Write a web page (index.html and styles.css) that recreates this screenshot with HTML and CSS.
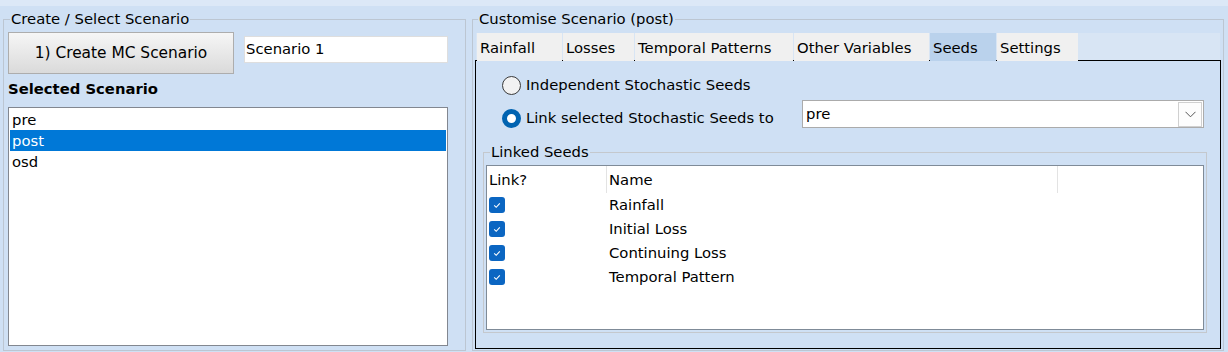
FILE: index.html
```html
<!DOCTYPE html>
<html>
<head>
<meta charset="utf-8">
<link rel="stylesheet" href="styles.css">
</head>
<body>
<div class="topbar"></div>
<div class="main">
  <fieldset class="group left">
    <legend>Create / Select Scenario</legend>
    <div class="create-row">
      <div class="btn">1) Create MC Scenario</div>
      <div class="textbox">Scenario 1</div>
    </div>
    <div class="section-title">Selected Scenario</div>
    <div class="listbox">
      <div class="item">pre</div>
      <div class="item selected">post</div>
      <div class="item">osd</div>
    </div>
  </fieldset>

  <fieldset class="group right">
    <legend>Customise Scenario (post)</legend>
    <div class="tabstrip">
      <div class="tab t-rain">Rainfall</div>
      <div class="tab t-loss">Losses</div>
      <div class="tab t-temp">Temporal Patterns</div>
      <div class="tab t-other">Other Variables</div>
      <div class="tab t-seeds active">Seeds</div>
      <div class="tab t-set">Settings</div>
    </div>
    <div class="tabpage">
      <div class="opt-row">
        <div class="radio"><span class="radio-dot"></span><span>Independent Stochastic Seeds</span></div>
      </div>
      <div class="opt-row second">
        <div class="radio linked-radio"><span class="radio-dot on"></span><span>Link selected Stochastic Seeds to</span></div>
        <div class="combo">
          <div class="combo-text">pre</div>
          <div class="dd-btn"><svg width="11" height="7" viewBox="0 0 11 7"><polyline points="0.5,0.8 5.5,5.8 10.5,0.8" fill="none" stroke="#555" stroke-width="1"/></svg></div>
        </div>
      </div>
      <fieldset class="linked">
        <legend>Linked Seeds</legend>
        <div class="grid">
          <div class="grid-head">
            <div class="cell col-link">Link?</div>
            <div class="cell col-name">Name</div>
          </div>
          <div class="grid-row"><div class="col-link"><span class="check"><svg width="16" height="16" viewBox="0 0 16 16"><polyline points="5.2,8.4 7.2,10.3 10.8,6.4" fill="none" stroke="#fff" stroke-width="1.1"/></svg></span></div><div class="col-name">Rainfall</div></div>
          <div class="grid-row"><div class="col-link"><span class="check"><svg width="16" height="16" viewBox="0 0 16 16"><polyline points="5.2,8.4 7.2,10.3 10.8,6.4" fill="none" stroke="#fff" stroke-width="1.1"/></svg></span></div><div class="col-name">Initial Loss</div></div>
          <div class="grid-row"><div class="col-link"><span class="check"><svg width="16" height="16" viewBox="0 0 16 16"><polyline points="5.2,8.4 7.2,10.3 10.8,6.4" fill="none" stroke="#fff" stroke-width="1.1"/></svg></span></div><div class="col-name">Continuing Loss</div></div>
          <div class="grid-row"><div class="col-link"><span class="check"><svg width="16" height="16" viewBox="0 0 16 16"><polyline points="5.2,8.4 7.2,10.3 10.8,6.4" fill="none" stroke="#fff" stroke-width="1.1"/></svg></span></div><div class="col-name">Temporal Pattern</div></div>
        </div>
      </fieldset>
    </div>
  </fieldset>
</div>
</body>
</html>
```

FILE: styles.css
```css
html, body {
  margin: 0;
  padding: 0;
}
body {
  width: 1228px;
  height: 352px;
  overflow: hidden;
  background: #cfe0f4;
  font-family: "DejaVu Sans", "Liberation Sans", sans-serif;
  font-size: 14.8px;
  line-height: 18px;
  color: #000;
}
.topbar {
  height: 6px;
  background: #dce8f7;
}
.main {
  display: flex;
  gap: 6px;
  padding: 4px 0 0 3px;
}
fieldset {
  margin: 0;
  min-width: 0;
  box-sizing: border-box;
}
legend {
  padding: 0 1px;
  line-height: 18px;
}
.group {
  border: 1px solid #bcc6d2;
  height: 341px;
}
.left {
  width: 463px;
  padding: 0 4px;
}
.left > legend {
  margin-left: 2px;
}
.right {
  width: 752px;
  padding: 0 2px 1px;
}
.right > legend {
  margin-left: 3px;
}

/* left panel */
.create-row {
  display: flex;
  align-items: flex-start;
  margin-top: 4px;
}
.btn {
  width: 226px;
  height: 42px;
  box-sizing: border-box;
  border: 1px solid #adadad;
  background: linear-gradient(#f6f6f6, #dadada);
  display: flex;
  align-items: center;
  justify-content: center;
  font-size: 15.4px;
}
.textbox {
  margin: 4px 0 0 10px;
  width: 204px;
  height: 27px;
  box-sizing: border-box;
  border: 1px solid #dedede;
  background: #fff;
  padding: 3px 1px 0;
}
.section-title {
  font-weight: bold;
  margin-top: 6px;
}
.listbox {
  margin-top: 9px;
  width: 440px;
  height: 239px;
  box-sizing: border-box;
  border: 1px solid #828790;
  background: #fff;
  padding: 1px;
}
.item {
  height: 21px;
  line-height: 21px;
  padding-left: 2px;
}
.item.selected {
  background: #0078d7;
  color: #fff;
}

/* tabs */
.tabstrip {
  display: flex;
  gap: 1px;
  height: 27px;
  margin: 5px 1px 0;
  padding-left: 1px;
  background: #d8e5f4;
}
.tab {
  position: relative;
  z-index: 1;
  height: 28px;
  box-sizing: border-box;
  padding: 6px 0 0 3px;
  background: #f0f0f0;
  white-space: nowrap;
  flex: none;
}
.tab.active {
  background: #bad2ec;
}
.t-rain { width: 85px; }
.t-loss { width: 71px; }
.t-temp { width: 158px; }
.t-other { width: 135px; }
.t-seeds { width: 66px; }
.t-set { width: 81px; }

.tabpage {
  height: 289px;
  box-sizing: border-box;
  border: 1px solid #000;
  padding: 14px 13px 0 7px;
}
.opt-row {
  display: flex;
  align-items: flex-start;
  padding-left: 19px;
}
.opt-row.second {
  margin-top: 5px;
}
.radio {
  display: flex;
  align-items: center;
  gap: 5px;
  height: 20px;
  white-space: nowrap;
}
.linked-radio {
  margin-top: 8px;
}
.radio-dot {
  width: 19px;
  height: 19px;
  box-sizing: border-box;
  border-radius: 50%;
  border: 1px solid #3a3a3a;
  background: #f2f2f2;
  flex: none;
}
.radio-dot.on {
  border: 5.5px solid #0063b1;
  background: #fff;
}
.combo {
  margin-left: auto;
  margin-right: 3px;
  width: 402px;
  height: 28px;
  box-sizing: border-box;
  border: 1px solid #ababab;
  background: #fff;
  display: flex;
}
.combo-text {
  flex: 1;
  padding: 4px 0 0 3px;
}
.dd-btn {
  width: 24px;
  height: 25px;
  margin: 1px 1px 0 0;
  box-sizing: border-box;
  border: 1px solid #d0d0d0;
  background: #fdfdfd;
  display: flex;
  align-items: center;
  justify-content: center;
}

/* linked seeds */
.linked {
  margin-top: 15px;
  border: 1px solid #c4c8cd;
  padding: 0 2px 2px;
}
.linked > legend {
  margin-left: 4px;
}
.grid {
  margin-top: 4px;
  height: 165px;
  box-sizing: border-box;
  border: 1px solid #7f8b98;
  background: #fff;
}
.grid-head {
  display: flex;
  height: 27px;
}
.grid-head .cell {
  padding-top: 5px;
  border-right: 1px solid #e3e3e3;
}
.col-link {
  width: 120px;
  box-sizing: border-box;
  padding-left: 2px;
  display: flex;
  align-items: center;
}
.grid-head .col-link {
  align-items: flex-start;
}
.col-name {
  width: 451px;
  box-sizing: border-box;
  padding-left: 2px;
}
.grid-row {
  display: flex;
  align-items: center;
  height: 24px;
}
.check {
  width: 16px;
  height: 16px;
  border-radius: 3px;
  background: #0b66c2;
  display: block;
}
.check svg {
  display: block;
}
```
